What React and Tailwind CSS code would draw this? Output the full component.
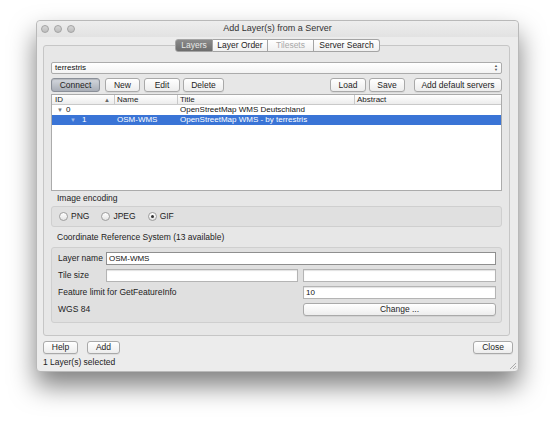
import React from 'react';

const font = { fontFamily: '"Liberation Sans", Arial, sans-serif' };

const Btn = ({ children, className = '', primary = false }) => (
  <div
    className={`flex items-center justify-center rounded-[3px] border text-[8.5px] leading-none text-[#1e1e1e] ${
      primary
        ? 'border-[#8a8f98] bg-gradient-to-b from-[#d4d8de] to-[#a9aeb7] shadow-[inset_0_1px_1px_rgba(0,0,0,0.15)]'
        : 'border-[#a9a9a9] bg-gradient-to-b from-white to-[#ededed] shadow-[0_1px_0_rgba(0,0,0,0.06)]'
    } ${className}`}
  >
    {children}
  </div>
);

const Input = ({ value = '', className = '', focus = false }) => (
  <div
    className={`flex h-[13px] items-center bg-white px-[2px] text-[8px] text-[#111] ${
      focus ? 'border-[1.5px] border-[#8f8f8f]' : 'border border-[#b4b4b4] shadow-[inset_0_1px_1px_rgba(0,0,0,0.12)]'
    } ${className}`}
  >
    {value}
  </div>
);

const Radio = ({ label, checked }) => (
  <div className="flex items-center gap-[3px]">
    <div className="flex h-[9px] w-[9px] items-center justify-center rounded-full border border-[#9d9d9d] bg-gradient-to-b from-white to-[#e4e4e4]">
      {checked && <div className="h-[3px] w-[3px] rounded-full bg-[#333]" />}
    </div>
    <span className="text-[8.5px] text-[#222]">{label}</span>
  </div>
);

const Tab = ({ children, active, disabled, className = '' }) => (
  <div
    className={`flex h-[13px] items-center justify-center border-y border-r border-[#a4a4a4] text-[8.5px] ${
      active
        ? 'bg-gradient-to-b from-[#8a8a8a] to-[#6d6d6d] text-[#e8e8e8] border-l rounded-l-[3px]'
        : disabled
        ? 'bg-gradient-to-b from-white to-[#f0f0f0] text-[#a8a8a8]'
        : 'bg-gradient-to-b from-white to-[#f0f0f0] text-[#1e1e1e]'
    } ${className}`}
  >
    {children}
  </div>
);

export default function App() {
  return (
    <div className="h-[422px] w-[555px] overflow-hidden bg-white pl-[36px] pt-[20px]" style={font}>
      <div className="relative flex h-[352px] w-[483px] flex-col rounded-[4px] border border-[#b9b9b9] bg-[#ececec] shadow-[0_14px_26px_rgba(0,0,0,0.5)]">
        {/* title bar */}
        <div className="relative flex h-[16px] items-center rounded-t-[4px] bg-gradient-to-b from-[#eeeeee] to-[#e2e2e2] pl-[4px]">
          <div className="flex gap-[5px]">
            {[0, 1, 2].map((i) => (
              <div key={i} className="h-[8px] w-[8px] rounded-full border border-[#a3a3a3] bg-gradient-to-b from-[#d6d6d6] to-[#bdbdbd]" />
            ))}
          </div>
          <div className="absolute inset-0 flex items-center justify-center text-[9px] text-[#333]">Add Layer(s) from a Server</div>
        </div>

        <div className="flex flex-1 flex-col px-[6px]">
          {/* tabs */}
          <div className="relative z-10 mt-[2px] flex justify-center">
            <Tab active className="w-[38px]">Layers</Tab>
            <Tab className="w-[55px]">Layer Order</Tab>
            <Tab disabled className="w-[46px]">Tilesets</Tab>
            <Tab className="w-[66px] rounded-r-[3px]">Server Search</Tab>
          </div>

          {/* pane */}
          <div className="mt-[-7px] flex h-[291px] w-[467px] flex-col rounded-[3px] border border-[#c6c6c6] bg-[#e7e7e7] px-[7px] pt-[16px]">
            {/* combo */}
            <div className="flex h-[12px] items-center justify-between rounded-[2px] border border-[#ababab] bg-gradient-to-b from-white to-[#f3f3f3] pl-[3px] pr-[3px] text-[8px] text-[#111]">
              <span>terrestris</span>
              <span className="flex flex-col text-[4px] leading-[4px] text-[#555]">
                <span>▲</span>
                <span>▼</span>
              </span>
            </div>

            {/* buttons */}
            <div className="mt-[4px] flex h-[14px]">
              <Btn primary className="w-[49px]">Connect</Btn>
              <Btn className="ml-[5px] w-[35px]">New</Btn>
              <Btn className="ml-[4px] w-[36px]">Edit</Btn>
              <Btn className="ml-[3px] w-[41px]">Delete</Btn>
              <div className="flex-1" />
              <Btn className="w-[36px]">Load</Btn>
              <Btn className="ml-[3px] w-[36px]">Save</Btn>
              <Btn className="ml-[9px] w-[88px]">Add default servers</Btn>
            </div>

            {/* table */}
            <div className="mt-[2px] h-[97px] border border-[#ababab] bg-white text-[8px]">
              <div className="grid h-[10px] grid-cols-[63px_63px_177px_1fr] border-b border-[#c9c9c9] bg-gradient-to-b from-white to-[#ececec] leading-[10px] text-[#222]">
                <div className="flex items-center justify-between border-r border-[#c9c9c9] pl-[3px] pr-[4px]">
                  <span>ID</span>
                  <span className="text-[6px] text-[#666]">▲</span>
                </div>
                <div className="border-r border-[#c9c9c9] pl-[2px]">Name</div>
                <div className="border-r border-[#c9c9c9] pl-[2px]">Title</div>
                <div className="pl-[2px]">Abstract</div>
              </div>
              <div className="grid h-[10px] grid-cols-[63px_63px_177px_1fr] leading-[10px] text-[#111]">
                <div className="flex items-center pl-[5px]">
                  <span className="text-[6px] text-[#777]">▼</span>
                  <span className="ml-[3px]">0</span>
                </div>
                <div />
                <div className="pl-[2px]">OpenStreetMap WMS Deutschland</div>
                <div />
              </div>
              <div className="grid h-[10px] grid-cols-[63px_63px_177px_1fr] bg-[#3a74d6] leading-[10px] text-white">
                <div className="flex items-center pl-[18px]">
                  <span className="text-[6px] text-[#9db8e8]">▼</span>
                  <span className="ml-[6px]">1</span>
                </div>
                <div className="pl-[2px]">OSM-WMS</div>
                <div className="pl-[2px]">OpenStreetMap WMS - by terrestris</div>
                <div />
              </div>
            </div>

            {/* image encoding */}
            <div className="mt-[1px] h-[12px] pl-[6px] text-[8.5px] leading-[12px] text-[#222]">Image encoding</div>
            <div className="mt-[2px] flex h-[21px] items-center gap-[12px] rounded-[3px] border border-[#cfcfcf] bg-[#e0e0e0] pl-[7px]">
              <Radio label="PNG" />
              <Radio label="JPEG" />
              <Radio label="GIF" checked />
            </div>

            {/* crs */}
            <div className="mt-[4px] h-[12px] pl-[6px] text-[8.5px] leading-[12px] text-[#222]">
              Coordinate Reference System (13 available)
            </div>
            <div className="mt-[4px] h-[76px] rounded-[3px] border border-[#cfcfcf] bg-[#e0e0e0] pl-[6px] pr-[5px] pt-[4px]">
              <div className="grid grid-cols-[43px_192px_1fr] gap-x-[5px] gap-y-[4px] text-[8.5px] text-[#222]">
                <div className="flex h-[13px] items-center whitespace-nowrap">Layer name</div>
                <Input value="OSM-WMS" focus className="col-span-2" />
                <div className="flex h-[13px] items-center">Tile size</div>
                <Input />
                <Input />
                <div className="col-span-2 flex h-[13px] items-center">Feature limit for GetFeatureInfo</div>
                <Input value="10" />
                <div className="col-span-2 flex h-[13px] items-center">WGS 84</div>
                <Btn className="h-[13px]">Change ...</Btn>
              </div>
            </div>
          </div>

          {/* bottom */}
          <div className="mt-[5px] flex h-[13px]">
            <Btn className="w-[35px]">Help</Btn>
            <Btn className="ml-[9px] w-[33px]">Add</Btn>
            <div className="flex-1" />
            <Btn className="mr-[-1px] w-[40px]">Close</Btn>
          </div>
          <div className="mt-[2px] text-[8.5px] leading-[12px] text-[#222]">1 Layer(s) selected</div>
        </div>

        <svg className="absolute bottom-[1px] right-[1px]" width="8" height="8" viewBox="0 0 8 8">
          <path d="M7 1L1 7M7 4L4 7M7 6.5L6.5 7" stroke="#9a9a9a" strokeWidth="0.8" fill="none" />
        </svg>
      </div>
    </div>
  );
}
